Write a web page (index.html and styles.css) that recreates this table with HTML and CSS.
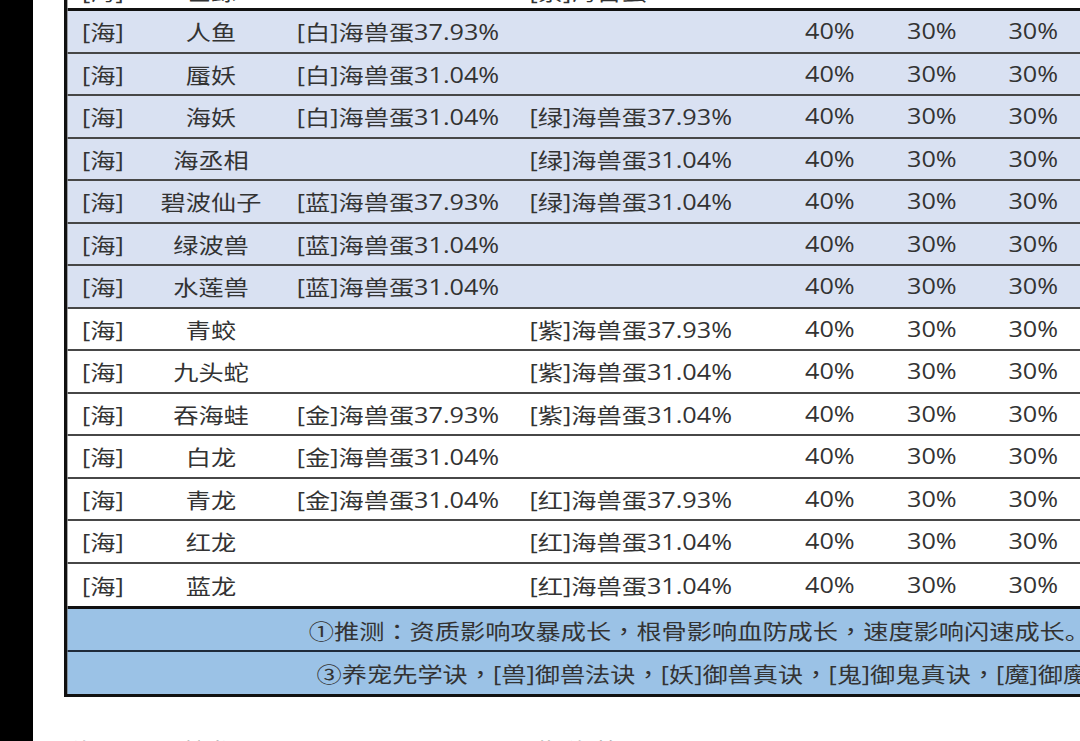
FILE: index.html
```html
<!DOCTYPE html>
<html lang="zh">
<head>
<meta charset="utf-8">
<title>海兽蛋</title>
<link rel="stylesheet" href="styles.css">
</head>
<body>
<div class="page">
  <div class="strip"></div>
  <div class="main">
    <div class="sheet">
      <div class="row row-top">
        <div class="c1">[海]</div><div class="c2">巨鲸</div><div class="c3"></div><div class="c4">[紫]海兽蛋</div><div class="c5"></div><div class="c6"></div><div class="c7"></div>
      </div>
      <div class="row lav">
        <div class="c1">[海]</div><div class="c2">人鱼</div><div class="c3">[白]海兽蛋37.93%</div><div class="c4"></div><div class="c5">40%</div><div class="c6">30%</div><div class="c7">30%</div>
      </div>
      <div class="row lav">
        <div class="c1">[海]</div><div class="c2">蜃妖</div><div class="c3">[白]海兽蛋31.04%</div><div class="c4"></div><div class="c5">40%</div><div class="c6">30%</div><div class="c7">30%</div>
      </div>
      <div class="row lav">
        <div class="c1">[海]</div><div class="c2">海妖</div><div class="c3">[白]海兽蛋31.04%</div><div class="c4">[绿]海兽蛋37.93%</div><div class="c5">40%</div><div class="c6">30%</div><div class="c7">30%</div>
      </div>
      <div class="row lav">
        <div class="c1">[海]</div><div class="c2">海丞相</div><div class="c3"></div><div class="c4">[绿]海兽蛋31.04%</div><div class="c5">40%</div><div class="c6">30%</div><div class="c7">30%</div>
      </div>
      <div class="row lav">
        <div class="c1">[海]</div><div class="c2">碧波仙子</div><div class="c3">[蓝]海兽蛋37.93%</div><div class="c4">[绿]海兽蛋31.04%</div><div class="c5">40%</div><div class="c6">30%</div><div class="c7">30%</div>
      </div>
      <div class="row lav">
        <div class="c1">[海]</div><div class="c2">绿波兽</div><div class="c3">[蓝]海兽蛋31.04%</div><div class="c4"></div><div class="c5">40%</div><div class="c6">30%</div><div class="c7">30%</div>
      </div>
      <div class="row lav">
        <div class="c1">[海]</div><div class="c2">水莲兽</div><div class="c3">[蓝]海兽蛋31.04%</div><div class="c4"></div><div class="c5">40%</div><div class="c6">30%</div><div class="c7">30%</div>
      </div>
      <div class="row">
        <div class="c1">[海]</div><div class="c2">青蛟</div><div class="c3"></div><div class="c4">[紫]海兽蛋37.93%</div><div class="c5">40%</div><div class="c6">30%</div><div class="c7">30%</div>
      </div>
      <div class="row">
        <div class="c1">[海]</div><div class="c2">九头蛇</div><div class="c3"></div><div class="c4">[紫]海兽蛋31.04%</div><div class="c5">40%</div><div class="c6">30%</div><div class="c7">30%</div>
      </div>
      <div class="row">
        <div class="c1">[海]</div><div class="c2">吞海蛙</div><div class="c3">[金]海兽蛋37.93%</div><div class="c4">[紫]海兽蛋31.04%</div><div class="c5">40%</div><div class="c6">30%</div><div class="c7">30%</div>
      </div>
      <div class="row">
        <div class="c1">[海]</div><div class="c2">白龙</div><div class="c3">[金]海兽蛋31.04%</div><div class="c4"></div><div class="c5">40%</div><div class="c6">30%</div><div class="c7">30%</div>
      </div>
      <div class="row">
        <div class="c1">[海]</div><div class="c2">青龙</div><div class="c3">[金]海兽蛋31.04%</div><div class="c4">[红]海兽蛋37.93%</div><div class="c5">40%</div><div class="c6">30%</div><div class="c7">30%</div>
      </div>
      <div class="row">
        <div class="c1">[海]</div><div class="c2">红龙</div><div class="c3"></div><div class="c4">[红]海兽蛋31.04%</div><div class="c5">40%</div><div class="c6">30%</div><div class="c7">30%</div>
      </div>
      <div class="row row-last">
        <div class="c1">[海]</div><div class="c2">蓝龙</div><div class="c3"></div><div class="c4">[红]海兽蛋31.04%</div><div class="c5">40%</div><div class="c6">30%</div><div class="c7">30%</div>
      </div>
      <div class="note note-1">①推测<span class="pu">：</span>资质影响攻暴成长<span class="pu">，</span>根骨影响血防成长<span class="pu">，</span>速度影响闪速成长。</div>
      <div class="note note-2">③养宠先学诀<span class="pu">，</span>[兽]御兽法诀<span class="pu">，</span>[妖]御兽真诀<span class="pu">，</span>[鬼]御鬼真诀<span class="pu">，</span>[魔]御魔真诀<span class="pu">，</span>[仙]御仙真诀。</div>
    </div>
    <div class="next">
      <div class="c1">[海]</div><div class="c2">蛟龙</div><div class="c3"></div><div class="c4">[紫]海兽蛋</div>
    </div>
  </div>
</div>
</body>
</html>
```

FILE: styles.css
```css
html, body {
  margin: 0;
  padding: 0;
  background: #ffffff;
}

.page {
  display: flex;
  width: 1080px;
  height: 741px;
  overflow: hidden;
  font-family: "Open Sans", "Noto Sans CJK SC", sans-serif;
  font-size: 21px;
  color: #333333;
}

.strip {
  flex: 0 0 33px;
  background: #000000;
}

.main {
  flex: 1 1 auto;
  padding-left: 31px;
  overflow: hidden;
  min-width: 0;
}

.sheet {
  width: 904px;
  margin-top: -26px;
  border-left: 3px solid #111;
  border-bottom: 3px solid #111;
  transform: scaleX(1.2);
  transform-origin: 0 0;
}

.row,
.next {
  display: grid;
  grid-template-columns: 77px 85px 223px 229.5px 85px 84.5px 120px;
  align-items: center;
  box-sizing: border-box;
  height: 42.5px;
  border-bottom: 2px solid #474747;
  background: #ffffff;
  white-space: nowrap;
}

.row.lav {
  background: #d9e1f2;
}

.row-top {
  height: 37px;
  border-bottom: 3px solid #111;
}

.row-last {
  height: 45.5px;
  border-bottom: 3px solid #111;
}

.c1 { padding-left: 12px; }
.c2 { text-align: center; }
.c3 { padding-left: 29px; }

.note {
  box-sizing: border-box;
  height: 43px;
  display: flex;
  align-items: center;
  background: #9bc2e6;
  white-space: nowrap;
}

.pu {
  font-family: "Noto Sans CJK TC", "Noto Sans CJK SC", sans-serif;
}

.note-1 {
  padding-left: 201px;
  border-bottom: 2px solid #1f2a3a;
}

.note-2 {
  height: 42px;
  padding-left: 207.5px;
}

.next {
  width: 904px;
  height: 30px;
  margin-top: 37px;
  align-items: start;
  border-bottom: none;
  background: transparent;
  transform: scaleX(1.2);
  transform-origin: 0 0;
  color: #8a8a8a;
}

.next .c1 {
  padding-left: 0;
}
```
